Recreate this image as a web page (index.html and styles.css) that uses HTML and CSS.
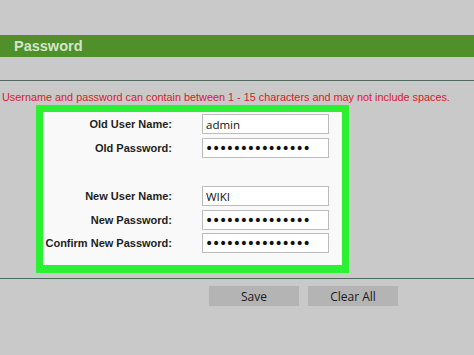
FILE: index.html
```html
<!DOCTYPE html>
<html lang="en">

<head>
  <meta charset="UTF-8">
  <meta name="viewport" content="width=device-width, initial-scale=1.0">
  <title>Password</title>
  <link rel="stylesheet" href="styles.css">
</head>

<body>
  <div class="header">Password</div>
  <hr class="rule">
  <p class="notice">Username and password can contain between 1 - 15 characters and may not include spaces.</p>

  <div class="form-box">
    <form class="fields">
      <label for="old_name">Old User Name:</label>
      <input id="old_name" type="text" value="admin">

      <label for="old_pass">Old Password:</label>
      <input id="old_pass" type="password" value="123456789012345">

      <label class="spaced" for="new_name">New User Name:</label>
      <input class="spaced" id="new_name" type="text" value="WIKI">

      <label for="new_pass">New Password:</label>
      <input id="new_pass" type="password" value="123456789012345">

      <label for="confirm_pass">Confirm New Password:</label>
      <input id="confirm_pass" type="password" value="123456789012345">
    </form>
  </div>

  <hr class="rule bottom">
  <div class="buttons">
    <button type="button">Save</button>
    <button type="button">Clear All</button>
  </div>
</body>

</html>
```

FILE: styles.css
```css
* {
  box-sizing: border-box;
}

body {
  margin: 0;
  background: #c9c9c9;
  font-family: "Liberation Sans", Arial, sans-serif;
  height: 355px;
  overflow: hidden;
}

.header {
  margin-top: 35px;
  height: 22px;
  line-height: 22px;
  padding-left: 14px;
  background: #4f902b;
  color: #d6e4cd;
  font-size: 14.5px;
  font-weight: bold;
}

.rule {
  margin: 23px 0 0;
  border: none;
  border-top: 1px solid #4b6c5c;
  height: 0;
}

.notice {
  margin: 10px 0 0 2px;
  font-size: 10.85px;
  line-height: 13px;
  color: #d7202a;
}

.form-box {
  margin: 1px 0 0 36px;
  width: 313px;
  border: 7px solid #2bf133;
  border-bottom-width: 8px;
  background: #f9f9f9;
  padding: 2px 0 12px;
}

.fields {
  display: grid;
  grid-template-columns: 129px 127px;
  column-gap: 30px;
  row-gap: 3.5px;
  align-items: center;
  margin: 0;
}

.fields label {
  text-align: right;
  font-size: 11px;
  font-weight: bold;
  color: #1e1e1e;
}

.fields .spaced {
  margin-top: 25px;
}

.fields input {
  height: 20px;
  width: 127px;
  border: 1px solid #bcbcbc;
  background: #fff;
  padding: 0 3px;
  font-family: "Open Sans", sans-serif;
  font-size: 11.5px;
  color: #111;
  outline: none;
}

.fields input[type="password"] {
  font-family: "DejaVu Sans", sans-serif;
  font-size: 14px;
  letter-spacing: -1.3px;
  padding-left: 2px;
}

.bottom {
  margin-top: 5px;
}

.buttons {
  display: flex;
  gap: 9px;
  margin: 7px 0 0 209px;
}

.buttons button {
  width: 90px;
  height: 20px;
  border: none;
  background: #b4b4b4;
  font-family: "Open Sans", sans-serif;
  font-size: 12px;
  color: #1a1a1a;
  padding: 0;
}
```
